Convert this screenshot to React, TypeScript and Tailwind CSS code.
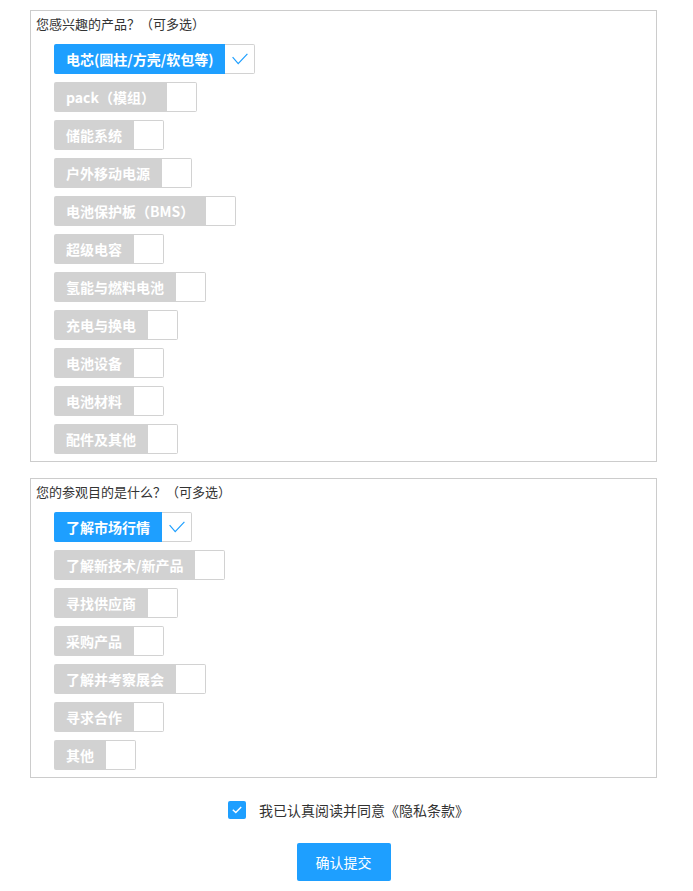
import { useState } from 'react'

const productOptions = [
  '电芯(圆柱/方壳/软包等)',
  'pack（模组）',
  '储能系统',
  '户外移动电源',
  '电池保护板（BMS）',
  '超级电容',
  '氢能与燃料电池',
  '充电与换电',
  '电池设备',
  '电池材料',
  '配件及其他',
]

const purposeOptions = ['了解市场行情', '了解新技术/新产品', '寻找供应商', '采购产品', '了解并考察展会', '寻求合作', '其他']

function CheckTile({ label, checked, onToggle }: { label: string; checked: boolean; onToggle: () => void }) {
  return (
    <button type="button" onClick={onToggle} className="flex h-[30px] w-fit cursor-pointer items-stretch">
      <span
        className={`flex items-center rounded-l-[2px] px-3 text-[14px] font-bold text-white ${
          checked ? 'bg-[#1e9fff]' : 'bg-[#d2d2d2]'
        }`}
      >
        {label}
      </span>
      <span className="flex w-[30px] items-center justify-center rounded-r-[2px] border border-l-0 border-[#d2d2d2] bg-white">
        {checked && (
          <svg width="16" height="12" viewBox="0 0 16 12" fill="none">
            <polyline points="0.6,4.2 6.2,10.6 15.4,0.8" stroke="#1e9fff" strokeWidth="1.2" />
          </svg>
        )}
      </span>
    </button>
  )
}

function OptionGroup({ title, options, initial }: { title: string; options: string[]; initial: string }) {
  const [selected, setSelected] = useState<string[]>([initial])

  const toggle = (value: string) => {
    setSelected((prev) => (prev.includes(value) ? prev.filter((v) => v !== value) : [...prev, value]))
  }

  return (
    <fieldset className="border border-[#cccccc] px-[5px] pt-[3px] pb-[7px]">
      <p className="text-[13px] leading-5 text-[#333]">{title}</p>
      <div className="mt-[10px] flex flex-col gap-2 pl-[18px]">
        {options.map((option) => (
          <CheckTile key={option} label={option} checked={selected.includes(option)} onToggle={() => toggle(option)} />
        ))}
      </div>
    </fieldset>
  )
}

export default function App() {
  const [agreed, setAgreed] = useState(true)

  return (
    <div
      className="min-h-screen bg-white pt-[10px] pr-[36px] pb-4 pl-[30px]"
      style={{ fontFamily: '"Noto Sans CJK SC", "Noto Sans", sans-serif' }}
    >
      <form className="flex flex-col" onSubmit={(event) => event.preventDefault()}>
        <OptionGroup title="您感兴趣的产品？（可多选）" options={productOptions} initial={productOptions[0]} />
        <div className="mt-4">
          <OptionGroup title="您的参观目的是什么？（可多选）" options={purposeOptions} initial={purposeOptions[0]} />
        </div>

        <label className="mt-[22px] flex h-5 cursor-pointer items-center justify-center gap-[13px] pl-[10px]">
          <button
            type="button"
            onClick={() => setAgreed(!agreed)}
            className={`flex h-[18px] w-[18px] items-center justify-center rounded-[2px] ${
              agreed ? 'bg-[#1e9fff]' : 'border border-[#d2d2d2] bg-white'
            }`}
          >
            {agreed && (
              <svg width="10" height="8" viewBox="0 0 10 8" fill="none">
                <polyline points="0.8,3.8 3.8,6.6 9.2,1" stroke="#fff" strokeWidth="1.4" />
              </svg>
            )}
          </button>
          <span className="text-[14px] leading-5 text-[#333]">我已认真阅读并同意《隐私条款》</span>
        </label>

        <div className="mt-[23px] flex justify-center">
          <button type="submit" className="h-[38px] w-[94px] rounded-[2px] bg-[#1e9fff] text-[14px] text-white">
            确认提交
          </button>
        </div>
      </form>
    </div>
  )
}
